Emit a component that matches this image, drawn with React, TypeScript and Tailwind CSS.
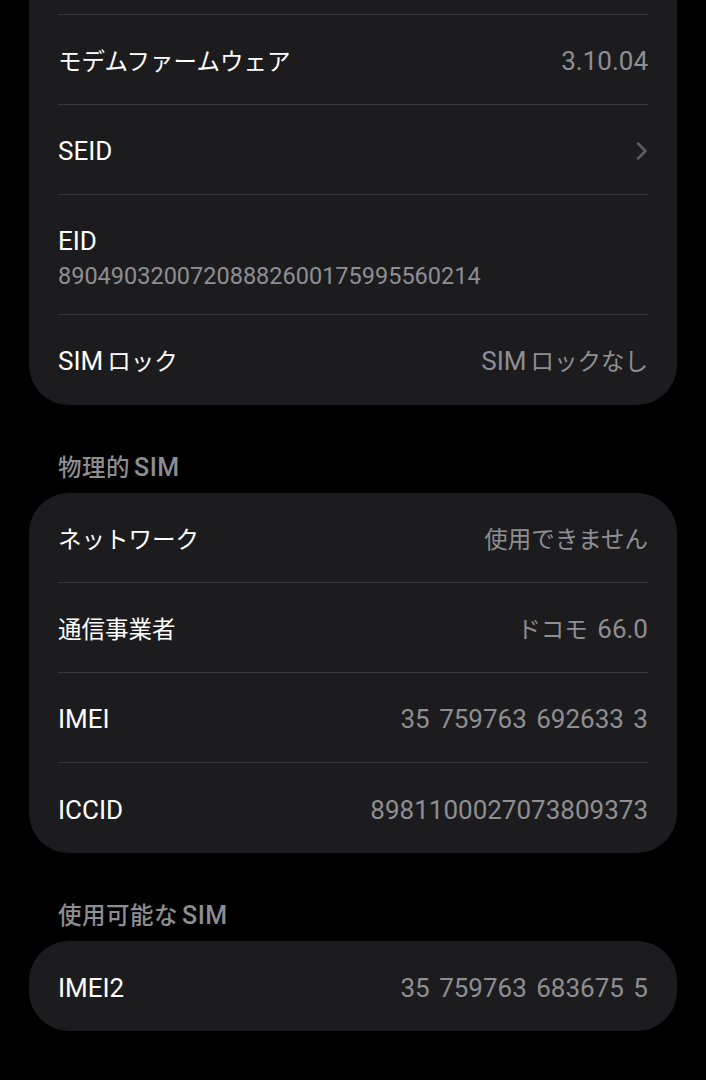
import React from 'react';

const CJK = /[\u3000-\u30ff\u4e00-\u9fff\uff00-\uffef]/;

// split into CJK / latin runs so the CJK glyphs can be set a bit smaller
const jp = (s: string) =>
  s.split(/([\u3000-\u30ff\u4e00-\u9fff\uff00-\uffef]+)/).filter(Boolean).map((part, i) =>
    CJK.test(part) ? (
      <span key={i} className={i > 0 ? 'ml-[4px] text-[23.5px]' : 'text-[23.5px]'}>{part}</span>
    ) : (
      <span key={i} className={i > 0 && !part.startsWith(' ') ? 'ml-[4px]' : ''}>{part}</span>
    )
  );

const Chevron = () => (
  <svg width="13" height="20" viewBox="0 0 13 20" fill="none">
    <path d="M3 2.5 L10.5 10 L3 17.5" stroke="#5c5c61" strokeWidth="2.6" strokeLinecap="round" strokeLinejoin="round" />
  </svg>
);

type RowProps = { label: string; value?: string; chevron?: boolean };

const Row: React.FC<RowProps> = ({ label, value, chevron }) => (
  <div className="flex h-[90px] items-center justify-between pt-[3px]">
    <span className="text-white leading-[32px]">{jp(label)}</span>
    {chevron ? (
      <Chevron />
    ) : (
      <span className="text-[#8e8e93] leading-[32px] [word-spacing:3px]">{jp(value ?? '')}</span>
    )}
  </div>
);

const Header: React.FC<{ title: string }> = ({ title }) => (
  <div className="px-[29px] pt-[48px] pb-[10px] text-[25px] leading-[30px] font-medium tracking-[0.5px] text-[#8d8d92]">
    {jp(title)}
  </div>
);

const App: React.FC = () => {
  return (
    <div className="min-h-screen bg-black px-[29px] font-['Roboto','Noto_Sans_CJK_JP',sans-serif] text-[26px]">
      <div className="bg-[#1c1c1e] rounded-b-[40px] px-[29px] divide-y divide-[#38383a]">
        <div className="h-[15px]" />
        <Row label="モデムファームウェア" value="3.10.04" />
        <Row label="SEID" chevron />
        <div className="h-[120px] pt-[30px]">
          <div className="text-white leading-[32px]">EID</div>
          <div className="mt-[5px] text-[23.5px] leading-[28px] text-[#8e8e93]">89049032007208882600175995560214</div>
        </div>
        <Row label="SIMロック" value="SIMロックなし" />
      </div>

      <Header title="物理的SIM" />
      <div className="bg-[#1c1c1e] rounded-[40px] px-[29px] divide-y divide-[#38383a]">
        <Row label="ネットワーク" value="使用できません" />
        <Row label="通信事業者" value="ドコモ 66.0" />
        <Row label="IMEI" value="35 759763 692633 3" />
        <Row label="ICCID" value="8981100027073809373" />
      </div>

      <Header title="使用可能なSIM" />
      <div className="bg-[#1c1c1e] rounded-[40px] px-[29px]">
        <Row label="IMEI2" value="35 759763 683675 5" />
      </div>
    </div>
  );
};

export default App;
